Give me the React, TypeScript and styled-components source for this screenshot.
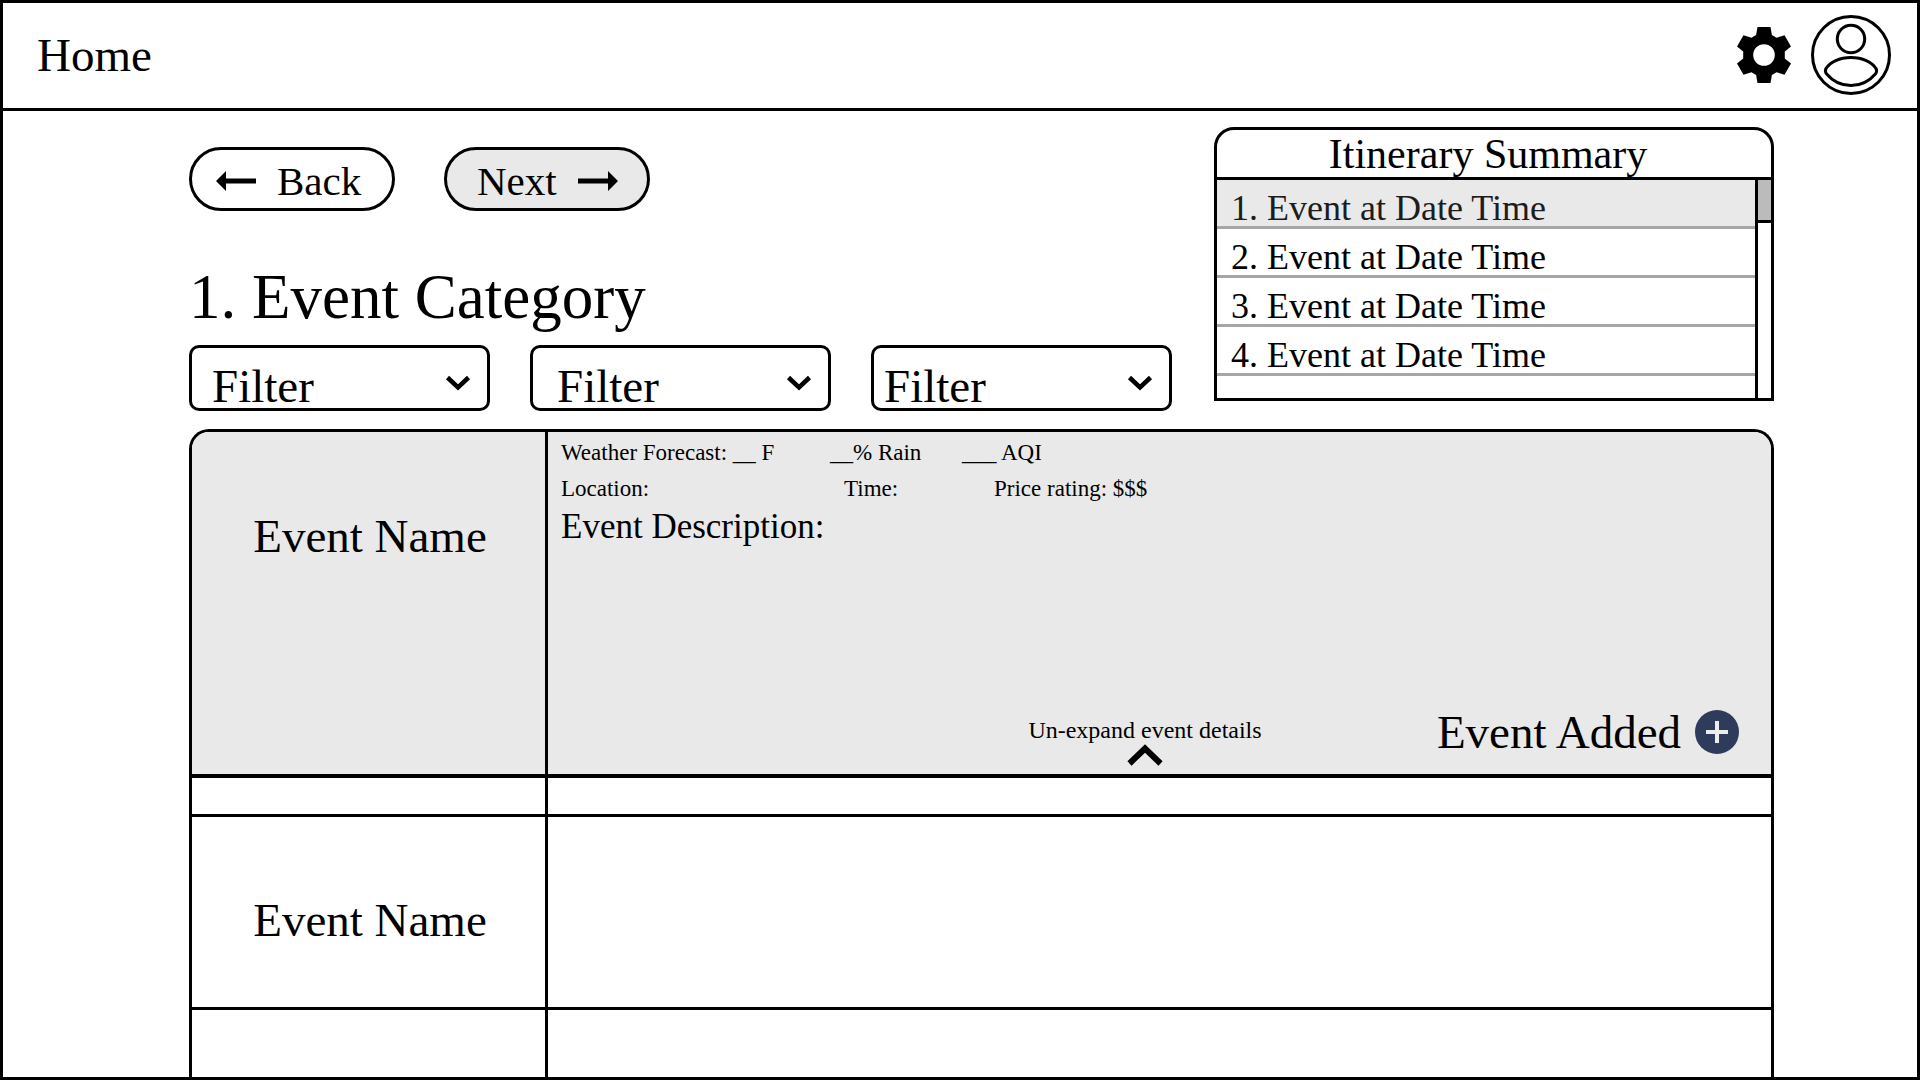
import React from "react";
import styled, { createGlobalStyle } from "styled-components";

const GlobalStyle = createGlobalStyle`
  *, *::before, *::after { box-sizing: border-box; }
  body {
    margin: 0;
    background: #fff;
    color: #000;
    font-family: "Liberation Serif", "Times New Roman", serif;
  }
  button, select { font-family: inherit; color: inherit; }
  h1, h2, h3, p, ol { margin: 0; padding: 0; font-weight: 400; }
`;

const Page = styled.div`
  min-height: 100vh;
  display: flex;
  flex-direction: column;
  border: 3px solid #000;
`;

const Header = styled.header`
  display: flex;
  align-items: center;
  justify-content: space-between;
  height: 108px;
  padding: 0 26px 2px 34px;
  border-bottom: 3px solid #000;
`;

const HomeLink = styled.a`
  font-size: 47px;
  line-height: 52px;
  color: inherit;
  text-decoration: none;
`;

const HeaderActions = styled.div`
  display: flex;
  align-items: center;
  gap: 20px;
`;

const IconButton = styled.button`
  display: flex;
  padding: 0;
  border: 0;
  background: none;
  cursor: pointer;
`;

const Main = styled.main`
  flex: 1;
  display: flex;
  flex-direction: column;
  gap: 18px;
  padding: 16px 143px 0 186px;
`;

const TopArea = styled.div`
  display: flex;
  align-items: flex-start;
  justify-content: space-between;
  gap: 40px;
`;

const Planner = styled.div`
  flex: 1;
  display: flex;
  flex-direction: column;
  padding-top: 20px;
`;

const StepNav = styled.nav`
  display: flex;
  gap: 49px;
`;

const StepButton = styled.button<{ $filled?: boolean; $inset: number }>`
  display: flex;
  align-items: center;
  gap: 21px;
  width: 206px;
  height: 64px;
  padding: 4px 0 0 ${(p) => p.$inset}px;
  border: 3px solid #000;
  border-radius: 32px;
  background: ${(p) => (p.$filled ? "#e9e9e9" : "#fff")};
  font-size: 41px;
  line-height: 46px;
  cursor: pointer;
`;

const CategoryTitle = styled.h1`
  margin-top: 50px;
  font-size: 63px;
  line-height: 72px;
`;

const Filters = styled.div`
  display: grid;
  grid-template-columns: repeat(3, minmax(0, 301px));
  gap: 40px;
  margin-top: 12px;
`;

const FilterBox = styled.label`
  display: grid;
  align-items: center;
  height: 66px;
  border: 3px solid #000;
  border-radius: 10px;

  > * { grid-area: 1 / 1; }
  > svg {
    justify-self: end;
    margin: 10px 16px 0 0;
    pointer-events: none;
  }
`;

const FilterSelect = styled.select<{ $inset: number }>`
  appearance: none;
  width: 100%;
  height: 60px;
  padding: 12px 48px 0 ${(p) => p.$inset}px;
  border: 0;
  border-radius: 8px;
  background: transparent;
  font-size: 47px;
  line-height: 52px;
`;

const Summary = styled.aside`
  display: flex;
  flex-direction: column;
  width: 560px;
  height: 274px;
  border: 3px solid #000;
  border-radius: 20px 20px 0 0;
  overflow: hidden;
`;

const SummaryTitle = styled.h2`
  height: 50px;
  padding-right: 12px;
  border-bottom: 3px solid #000;
  font-size: 42px;
  line-height: 48px;
  text-align: center;
`;

const SummaryBody = styled.div`
  flex: 1;
  min-height: 0;
  display: flex;
`;

const SummaryList = styled.ol`
  flex: 1;
  list-style: none;
`;

const SummaryItem = styled.li<{ $current?: boolean }>`
  height: 49px;
  padding: 8px 0 0 14px;
  border-bottom: 3px solid #a6a6a6;
  background: ${(p) => (p.$current ? "#e9e9e9" : "#fff")};
  color: ${(p) => (p.$current ? "#1c1c1c" : "#000")};
  font-size: 36px;
  line-height: 40px;
`;

const ScrollTrack = styled.div`
  width: 16px;
  border-left: 3px solid #000;
`;

const ScrollThumb = styled.div`
  height: 43px;
  border-bottom: 3px solid #000;
  background: #bbb;
`;

const Board = styled.section`
  flex: 1;
  display: flex;
  flex-direction: column;
  border: 3px solid #000;
  border-bottom: 0;
  border-radius: 20px 20px 0 0;
  overflow: hidden;
`;

const EventRow = styled.article<{ $height: number; $line: number; $open?: boolean }>`
  flex: ${(p) => (p.$line ? "none" : "1")};
  display: grid;
  grid-template-columns: 356px minmax(0, 1fr);
  min-height: ${(p) => p.$height}px;
  border-bottom: ${(p) => p.$line}px solid #000;
  background: ${(p) => (p.$open ? "#e9e9e9" : "#fff")};
`;

const NameCell = styled.div<{ $top?: number }>`
  display: flex;
  justify-content: center;
  padding: ${(p) => p.$top ?? 0}px 0 0 3px;
  border-right: 3px solid #000;
`;

const EventName = styled.h2`
  font-size: 47px;
  line-height: 52px;
`;

const DetailCell = styled.div`
  display: flex;
  flex-direction: column;
  justify-content: space-between;
`;

const Facts = styled.div`
  padding: 3px 13px 0;
`;

const FactLine = styled.div<{ $columns: string }>`
  display: grid;
  grid-template-columns: ${(p) => p.$columns};
  font-size: 23px;
  line-height: 36px;
  white-space: nowrap;
`;

const Description = styled.h3`
  font-size: 35px;
  line-height: 40px;
`;

const DetailFooter = styled.div`
  display: grid;
  grid-template-columns: 1fr auto 1fr;
  align-items: end;
  padding: 0 32px 8px 3px;
`;

const CollapseButton = styled.button`
  grid-column: 2;
  display: flex;
  flex-direction: column;
  align-items: center;
  padding: 0;
  border: 0;
  background: none;
  font-size: 24px;
  line-height: 28px;
  cursor: pointer;
`;

const AddedStatus = styled.div`
  display: flex;
  justify-content: flex-end;
  align-items: center;
  gap: 14px;
  padding-bottom: 8px;
  font-size: 47px;
  line-height: 52px;
  white-space: nowrap;
`;

const GearIcon = () => (
  <svg width="54" height="56" viewBox="0 0 54 56" aria-hidden="true">
    <path
      fillRule="evenodd"
      d="M20.5 0h13l1.400 8 4.600 2.800 8-2.600L54 19.400l-6.200 5.200v6.800L54 36.600l-6.500 11.200-8-2.600-4.600 2.800-1.400 8h-13l-1.400-8-4.600-2.800-8 2.600L0 36.600l6.200-5.200v-6.800L0 19.400 6.500 8.200l8 2.600L19.100 8zM27 17.200a10.800 10.800 0 1 0 0 21.600 10.800 10.800 0 0 0 0-21.600z"
    />
  </svg>
);

const ProfileIcon = () => (
  <svg width="80" height="80" viewBox="0 0 80 80" fill="none" stroke="#000" strokeWidth="3" aria-hidden="true">
    <circle cx="40" cy="40" r="38.500" />
    <circle cx="40" cy="24" r="13.700" />
    <path d="M15 53.500C19 47 28.500 42.500 40 42.500S61 47 65 53.500c1 2 .8 3.600-.4 5.200C58 66.500 49.500 70.500 40 70.500S22 66.500 15.400 58.700c-1.200-1.600-1.400-3.200-.4-5.200z" />
  </svg>
);

const ArrowLeft = () => (
  <svg width="40" height="20" viewBox="0 0 40 20" aria-hidden="true">
    <path d="M0 10 10 0v7.500h30v5H10V20z" />
  </svg>
);

const ArrowRight = () => (
  <svg width="40" height="20" viewBox="0 0 40 20" aria-hidden="true">
    <path d="M40 10 30 0v7.500H0v5h30V20z" />
  </svg>
);

const ChevronDown = () => (
  <svg width="26" height="16" viewBox="0 0 26 16" fill="none" stroke="#000" strokeWidth="4.500" aria-hidden="true">
    <path d="M2.500 2.500 13 12.500 23.500 2.500" />
  </svg>
);

const ChevronUp = () => (
  <svg width="36" height="22" viewBox="0 0 36 22" fill="none" stroke="#000" strokeWidth="6" aria-hidden="true">
    <path d="M2.500 19.500 18 4.500l15.500 15" />
  </svg>
);

const PlusBadge = () => (
  <svg width="44" height="44" viewBox="0 0 44 44" aria-hidden="true">
    <circle cx="22" cy="22" r="22" fill="#2e3b5b" />
    <path d="M22 11v22M11 22h22" stroke="#ececec" strokeWidth="4" />
  </svg>
);

const filters = [
  { id: "filter-1", inset: 20 },
  { id: "filter-2", inset: 24 },
  { id: "filter-3", inset: 10 },
];

const itinerary = [1, 2, 3, 4];

export default function App() {
  return (
    <>
      <GlobalStyle />
      <Page>
        <Header>
          <HomeLink href="#">Home</HomeLink>
          <HeaderActions>
            <IconButton type="button" aria-label="Settings"><GearIcon /></IconButton>
            <IconButton type="button" aria-label="Profile"><ProfileIcon /></IconButton>
          </HeaderActions>
        </Header>

        <Main>
          <TopArea>
            <Planner>
              <StepNav>
                <StepButton type="button" $inset={24}><ArrowLeft />Back</StepButton>
                <StepButton type="button" $inset={30} $filled>Next<ArrowRight /></StepButton>
              </StepNav>
              <CategoryTitle>1. Event Category</CategoryTitle>
              <Filters>
                {filters.map((f) => (
                  <FilterBox key={f.id} htmlFor={f.id}>
                    <FilterSelect id={f.id} aria-label="Filter" $inset={f.inset}>
                      <option>Filter</option>
                    </FilterSelect>
                    <ChevronDown />
                  </FilterBox>
                ))}
              </Filters>
            </Planner>

            <Summary>
              <SummaryTitle>Itinerary Summary</SummaryTitle>
              <SummaryBody>
                <SummaryList>
                  {itinerary.map((n) => (
                    <SummaryItem key={n} $current={n === 1}>{n}. Event at Date Time</SummaryItem>
                  ))}
                </SummaryList>
                <ScrollTrack><ScrollThumb /></ScrollTrack>
              </SummaryBody>
            </Summary>
          </TopArea>

          <Board>
            <EventRow $height={346} $line={4} $open>
              <NameCell $top={78}><EventName>Event Name</EventName></NameCell>
              <DetailCell>
                <Facts>
                  <FactLine $columns="269px 132px auto">
                    <span>Weather Forecast: __ F</span>
                    <span>__% Rain</span>
                    <span>___ AQI</span>
                  </FactLine>
                  <FactLine $columns="283px 150px auto">
                    <span>Location:</span>
                    <span>Time:</span>
                    <span>Price rating: $$$</span>
                  </FactLine>
                  <Description>Event Description:</Description>
                </Facts>
                <DetailFooter>
                  <CollapseButton type="button">
                    Un-expand event details
                    <ChevronUp />
                  </CollapseButton>
                  <AddedStatus>
                    Event Added
                    <IconButton type="button" aria-label="Add event"><PlusBadge /></IconButton>
                  </AddedStatus>
                </DetailFooter>
              </DetailCell>
            </EventRow>
            <EventRow $height={39} $line={3}>
              <NameCell />
              <DetailCell />
            </EventRow>
            <EventRow $height={193} $line={3}>
              <NameCell $top={77}><EventName>Event Name</EventName></NameCell>
              <DetailCell />
            </EventRow>
            <EventRow $height={64} $line={0}>
              <NameCell />
              <DetailCell />
            </EventRow>
          </Board>
        </Main>
      </Page>
    </>
  );
}
